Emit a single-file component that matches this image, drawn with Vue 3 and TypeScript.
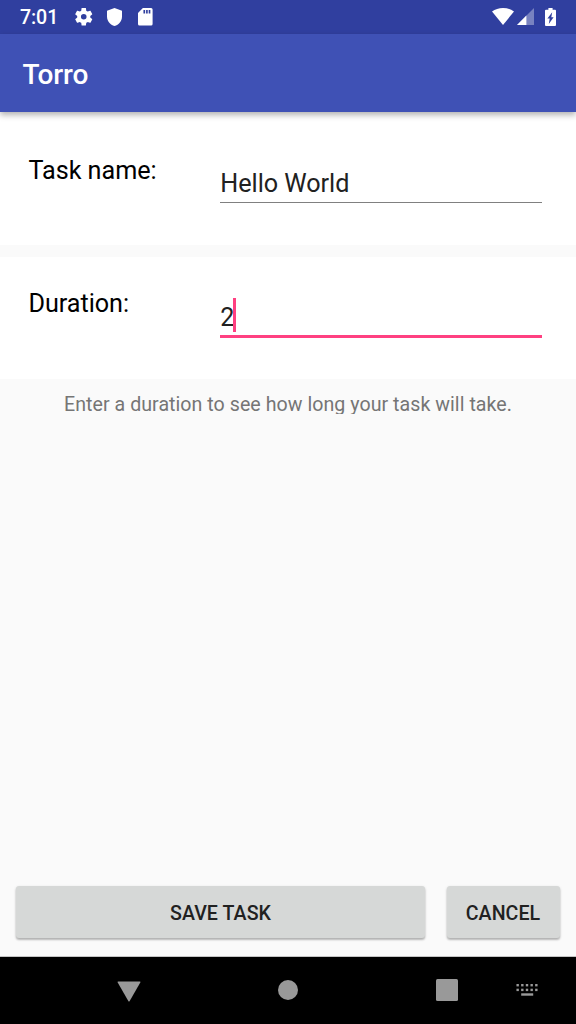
<script setup lang="ts">
import { ref } from 'vue'

interface Field {
  label: string
  value: string
  active: boolean
}

const fields = ref<Field[]>([
  { label: 'Task name:', value: 'Hello World', active: false },
  { label: 'Duration:', value: '2', active: true },
])

const keyColumns = [2, 4.7, 7.4, 10.1, 12.8].map((n) => n * 1.73)
</script>

<template>
  <div class="screen">
    <header class="status">
      <span class="clock">7:01</span>
      <svg class="gear" viewBox="2 2 20 20">
        <path d="M19.43 12.98c.04-.32.07-.64.07-.98s-.03-.66-.07-.98l2.11-1.65c.19-.15.24-.42.12-.64l-2-3.46c-.12-.22-.39-.3-.61-.22l-2.49 1c-.52-.4-1.08-.73-1.69-.98l-.38-2.65C14.46 2.18 14.25 2 14 2h-4c-.25 0-.46.18-.49.42l-.38 2.65c-.61.25-1.17.59-1.69.98l-2.49-1c-.23-.09-.49 0-.61.22l-2 3.46c-.13.22-.07.49.12.64l2.11 1.65c-.04.32-.07.65-.07.98s.03.66.07.98l-2.11 1.65c-.19.15-.24.42-.12.64l2 3.46c.12.22.39.3.61.22l2.49-1c.52.4 1.08.73 1.69.98l.38 2.65c.03.24.24.42.49.42h4c.25 0 .46-.18.49-.42l.38-2.65c.61-.25 1.17-.59 1.69-.98l2.49 1c.23.09.49 0 .61-.22l2-3.46c.12-.22.07-.49-.12-.64l-2.11-1.65zM12 15.2a3.2 3.2 0 1 1 0-6.4 3.2 3.2 0 0 1 0 6.4z" />
      </svg>
      <svg class="shield" viewBox="0 0 15 18">
        <path d="M7.5 0 15 2.8V8.5C15 13 11.8 16.8 7.5 18 3.2 16.8 0 13 0 8.5V2.8Z" />
      </svg>
      <svg class="sd" viewBox="0 0 15 18">
        <path fill-rule="evenodd" d="M5 0H13.4Q15 0 15 1.6V16.4Q15 18 13.4 18H1.6Q0 18 0 16.4V5ZM5.6 2V5.6H7.3V2ZM8.3 2V5.6H10V2ZM11 2V5.6H12.7V2Z" />
      </svg>
      <span class="spacer"></span>
      <svg class="wifi" viewBox="0 0 22 17">
        <path d="M11 17 0 3.5Q4.7 0 11 0T22 3.5Z" />
      </svg>
      <svg class="signal" viewBox="0 0 17 17">
        <path opacity=".35" d="M17 0V17H0Z" />
        <path d="M9.4 7.6V17H0Z" />
      </svg>
      <svg class="battery" viewBox="0 0 11 18">
        <path fill-rule="evenodd" d="M3.4 0H7.6V1.7H10Q11 1.7 11 2.7V17Q11 18 10 18H1Q0 18 0 17V2.7Q0 1.7 1 1.7H3.4ZM7.2 4.2 2.4 10.4H4.7L3.8 16 8.6 9.2H6.3Z" />
      </svg>
    </header>
    <div class="toolbar"><h1>Torro</h1></div>

    <main class="content">
      <section v-for="field in fields" :key="field.label" class="card">
        <span class="label">{{ field.label }}</span>
        <div class="field" :class="{ active: field.active }">
          <span class="value">{{ field.value }}</span>
          <span v-if="field.active" class="caret"></span>
        </div>
      </section>
      <p class="hint">Enter a duration to see how long your task will take.</p>
      <div class="actions">
        <button class="save" type="button">SAVE TASK</button>
        <button class="cancel" type="button">CANCEL</button>
      </div>
    </main>

    <nav class="navbar">
      <svg class="back" viewBox="0 0 24 21">
        <path d="M1.2 0.5H22.8Q23.8 .6 23.3 1.6L12.7 20Q12 21 11.3 20L.7 1.6Q.2 .6 1.2 .5Z" />
      </svg>
      <svg class="home" viewBox="0 0 20 20"><circle cx="10" cy="10" r="10" /></svg>
      <svg class="recent" viewBox="0 0 22 22"><rect width="22" height="22" rx="1.5" /></svg>
      <svg class="keyboard" viewBox="0 0 28 16">
        <template v-for="x in keyColumns" :key="x">
          <rect :x="x" y="2" width="2.4" height="2.4" />
          <rect :x="x" y="6.7" width="2.4" height="2.4" />
        </template>
        <rect x="8.2" y="11.3" width="12" height="2.4" />
      </svg>
    </nav>
  </div>
</template>

<style>
body {
  margin: 0;
}
</style>

<style scoped>
.screen {
  width: 576px;
  height: 1024px;
  display: flex;
  flex-direction: column;
  overflow: hidden;
  background: #fafafa;
  font-family: Roboto, sans-serif;
}
svg {
  display: block;
  flex: none;
}
.status {
  height: 33.6px;
  flex: none;
  display: flex;
  align-items: center;
  box-sizing: border-box;
  padding: 0 20.5px 0 20px;
  background: #303f9f;
  color: #fff;
  fill: #fff;
}
.clock {
  width: 55px;
  font-size: 19.6px;
  font-weight: 500;
  line-height: 24px;
  margin-top: 3px;
  letter-spacing: -0.1px;
}
.gear {
  width: 17.5px;
  height: 17.5px;
}
.shield {
  width: 15px;
  height: 18px;
  margin-left: 14.6px;
}
.sd {
  width: 14.6px;
  height: 17.6px;
  margin-left: 16.4px;
}
.spacer {
  flex: 1;
}
.wifi {
  width: 22px;
  height: 17px;
  margin-top: -1px;
}
.signal {
  width: 17px;
  height: 17px;
  margin-left: 3px;
}
.battery {
  width: 11px;
  height: 18px;
  margin-left: 10.4px;
}
.toolbar {
  height: 78.4px;
  flex: none;
  display: flex;
  align-items: center;
  padding-left: 22.4px;
  background: #3f51b5;
  box-shadow: 0 3px 6px rgba(0, 0, 0, 0.3);
  z-index: 1;
}
h1 {
  margin: 4px 0 0;
  color: #fff;
  font-size: 28px;
  font-weight: 500;
  line-height: 33px;
  letter-spacing: -0.1px;
}
.content {
  flex: 1;
  display: flex;
  flex-direction: column;
  border-bottom: 1px solid #c4c4c4;
}
.card {
  height: 121.9px;
  flex: none;
  display: flex;
  align-items: flex-start;
  box-sizing: border-box;
  padding: 0 33.7px 0 28.4px;
  background: #fff;
}
.card:first-child {
  height: 133.3px;
  padding-top: 11.4px;
}
.card + .card {
  margin-top: 11.4px;
}
.label {
  width: 191.9px;
  margin-top: 32.4px;
  font-size: 25.2px;
  line-height: 30px;
  letter-spacing: -0.03px;
  color: #000;
}
.field {
  flex: 1;
  height: 34.6px;
  margin-top: 44px;
  display: flex;
  align-items: flex-start;
  border-bottom: 1.4px solid #808080;
  color: #212121;
}
.field.active {
  margin-top: 41.5px;
  height: 37.2px;
  border-bottom: 3px solid #ff4081;
}
.value {
  margin-top: 1.5px;
  font-size: 25.2px;
  line-height: 30px;
  letter-spacing: -0.03px;
}
.active .value {
  margin-top: 5px;
}
.caret {
  width: 3px;
  height: 34px;
  margin-left: -1px;
  background: #ff4081;
}
.hint {
  height: 21.4px;
  margin: 14px 0 0;
  overflow: hidden;
  text-align: center;
  font-size: 19.6px;
  line-height: 23px;
  letter-spacing: 0.045px;
  color: #757575;
}
.actions {
  display: flex;
  gap: 22px;
  margin-top: auto;
  padding: 0 16px 18px;
}
button {
  height: 52px;
  padding: 2px 0 0;
  border: 0;
  border-radius: 3px;
  background: #d6d8d7;
  box-shadow: 0 2px 2px rgba(0, 0, 0, 0.2), 0 1px 3px rgba(0, 0, 0, 0.16);
  color: #212121;
  font-family: inherit;
  font-size: 19.6px;
  font-weight: 500;
  letter-spacing: 0.06px;
}
.save {
  flex: 1;
}
.cancel {
  width: 113px;
  padding-right: 1px;
}
.navbar {
  height: 67px;
  flex: none;
  display: flex;
  align-items: center;
  box-sizing: border-box;
  padding: 0 0 1px 116.5px;
  background: #000;
  fill: #999;
}
.back {
  width: 24px;
  height: 21px;
  margin-top: 2px;
}
.home {
  width: 20px;
  height: 20px;
  margin-left: 137px;
}
.recent {
  width: 22px;
  height: 22px;
  margin-left: 138.5px;
}
.keyboard {
  width: 28px;
  height: 16px;
  margin-left: 55px;
}
</style>
